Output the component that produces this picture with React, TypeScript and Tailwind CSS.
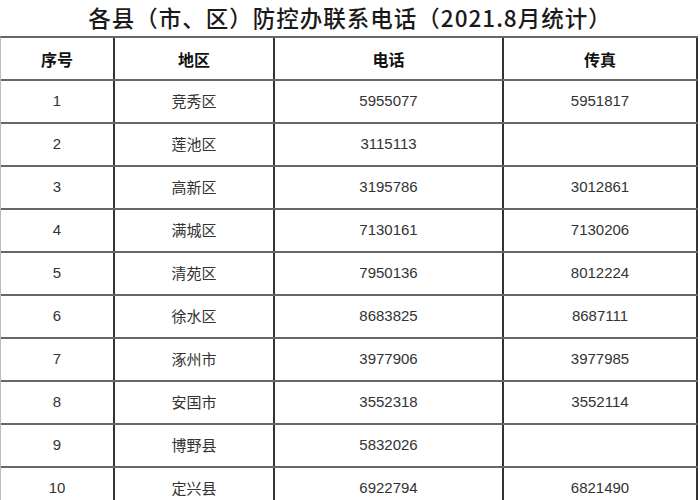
import React from "react";

const rows = [
  ["1", "竞秀区", "5955077", "5951817"],
  ["2", "莲池区", "3115113", ""],
  ["3", "高新区", "3195786", "3012861"],
  ["4", "满城区", "7130161", "7130206"],
  ["5", "清苑区", "7950136", "8012224"],
  ["6", "徐水区", "8683825", "8687111"],
  ["7", "涿州市", "3977906", "3977985"],
  ["8", "安国市", "3552318", "3552114"],
  ["9", "博野县", "5832026", ""],
  ["10", "定兴县", "6922794", "6821490"],
];

const cell = "flex items-center justify-center border-r-2 border-[#333]";
const cjk = "font-['Noto_Sans_CJK_SC',sans-serif]";
const num = "font-['Liberation_Sans',Arial,sans-serif] text-[15px] text-[#333]";

export default function App() {
  return (
    <div className="w-[700px] h-[500px] overflow-hidden bg-white">
      {/* Title */}
      <div className={`h-[36px] flex items-center justify-center text-[22.5px] font-medium text-[#1a1a1a] tracking-[1px] ${cjk}`}>
        各县（市、区）防控办联系电话（2021.8月统计）
      </div>

      {/* Table */}
      <div className="w-[698px] border-t-2 border-l border-t-[#666] border-l-[#bbb]">
        <div className="grid grid-cols-[114px_160px_229px_194px] h-[43px] border-b-2 border-[#666]">
          {["序号", "地区", "电话", "传真"].map((h) => (
            <div key={h} className={`${cell} ${cjk} text-[16px] font-bold text-[#111]`}>
              {h}
            </div>
          ))}
        </div>
        {rows.map((r) => (
          <div
            key={r[0]}
            className="grid grid-cols-[114px_160px_229px_194px] h-[43px] border-b-2 border-[#666]"
          >
            <div className={`${cell} ${num}`}>{r[0]}</div>
            <div className={`${cell} ${cjk} text-[15px] text-[#333]`}>{r[1]}</div>
            <div className={`${cell} ${num}`}>{r[2]}</div>
            <div className={`${cell} ${num}`}>{r[3]}</div>
          </div>
        ))}
      </div>
    </div>
  );
}
